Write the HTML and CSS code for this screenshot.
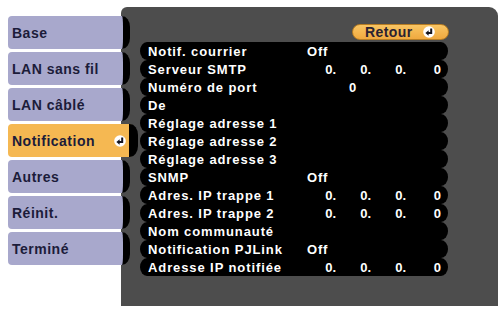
FILE: index.html
```html
<!DOCTYPE html>
<html lang="fr">
<head>
<meta charset="utf-8">
<title>Notification</title>
<link rel="stylesheet" href="styles.css">
</head>
<body>
<div class="screen">
  <nav class="tabs">
    <div class="tab">Base</div>
    <div class="tab">LAN sans fil</div>
    <div class="tab">LAN câblé</div>
    <div class="tab active">Notification
      <svg class="ret" viewBox="0 0 12 12" width="12" height="12"><circle cx="6" cy="6" r="5.8" fill="#fff"/><path d="M8.2 2.6 V7 H5" fill="none" stroke="#15151f" stroke-width="2"/><path d="M2.4 7 L5.6 4.3 V9.7 Z" fill="#15151f"/></svg>
    </div>
    <div class="tab">Autres</div>
    <div class="tab">Réinit.</div>
    <div class="tab">Terminé</div>
  </nav>
  <section class="panel">
    <div class="content">
      <div class="top">
        <div class="back">Retour
          <svg class="ret" viewBox="0 0 12 12" width="12" height="12"><circle cx="6" cy="6" r="5.8" fill="#fff"/><path d="M8.2 2.6 V7 H5" fill="none" stroke="#15151f" stroke-width="2"/><path d="M2.4 7 L5.6 4.3 V9.7 Z" fill="#15151f"/></svg>
        </div>
      </div>
      <div class="rows">
        <div class="row"><span class="label">Notif. courrier</span><span class="val">Off</span></div>
        <div class="row"><span class="label">Serveur SMTP</span><span class="ip"><span>0.</span><span>0.</span><span>0.</span><span>0</span></span></div>
        <div class="row"><span class="label">Numéro de port</span><span class="port">0</span></div>
        <div class="row"><span class="label">De</span></div>
        <div class="row"><span class="label">Réglage adresse 1</span></div>
        <div class="row"><span class="label">Réglage adresse 2</span></div>
        <div class="row"><span class="label">Réglage adresse 3</span></div>
        <div class="row"><span class="label">SNMP</span><span class="val">Off</span></div>
        <div class="row"><span class="label">Adres. IP trappe 1</span><span class="ip"><span>0.</span><span>0.</span><span>0.</span><span>0</span></span></div>
        <div class="row"><span class="label">Adres. IP trappe 2</span><span class="ip"><span>0.</span><span>0.</span><span>0.</span><span>0</span></span></div>
        <div class="row"><span class="label">Nom communauté</span></div>
        <div class="row"><span class="label">Notification PJLink</span><span class="val">Off</span></div>
        <div class="row"><span class="label">Adresse IP notifiée</span><span class="ip"><span>0.</span><span>0.</span><span>0.</span><span>0</span></span></div>
      </div>
    </div>
  </section>
</div>
</body>
</html>
```
FILE: styles.css
```css
html, body {
  margin: 0;
  padding: 0;
  background: #fff;
}
body {
  width: 504px;
  height: 309px;
  overflow: hidden;
  font-family: "Liberation Sans", Arial, sans-serif;
}
.screen {
  display: flex;
  align-items: flex-start;
  box-sizing: border-box;
  height: 309px;
  padding: 7px 6px 0 8px;
}
.tabs {
  position: relative;
  z-index: 1;
  flex: 0 0 130px;
  display: flex;
  flex-direction: column;
  align-items: flex-start;
  gap: 3px;
  padding-top: 9px;
}
.tab {
  box-sizing: border-box;
  width: 122px;
  height: 33px;
  display: flex;
  align-items: center;
  justify-content: space-between;
  padding-left: 4px;
  background: #a8a8cc;
  border-right: 7px solid #000;
  border-radius: 4px 8px 8px 4px / 4px 11px 11px 4px;
  color: #1c1c3a;
  font-weight: bold;
  font-size: 14px;
  letter-spacing: 0.5px;
}
.tab.active {
  width: 130px;
  background: #f5b852;
  border-right-width: 9px;
  padding-right: 3px;
}
.tab .ret {
  display: block;
}
.panel {
  flex: 1;
  margin-left: -17px;
  height: 299px;
  background: #4d4d4d;
  border-radius: 6px 9px 0 0;
}
.content {
  width: 308px;
  padding: 17px 0 0 19px;
}
.top {
  display: flex;
  justify-content: flex-end;
  margin-right: -1px;
  margin-bottom: 2px;
}
.back {
  box-sizing: border-box;
  width: 97px;
  height: 16px;
  display: flex;
  align-items: center;
  justify-content: space-between;
  padding: 0 13px 0 12px;
  background: linear-gradient(#f9c563, #f0a93f);
  border: 1px solid #b77d24;
  border-radius: 8px;
  color: #2a2232;
  font-weight: bold;
  font-size: 14px;
  letter-spacing: 0.4px;
}
.back .ret {
  display: block;
}
.rows {
  display: flex;
  flex-direction: column;
}
.row {
  height: 18px;
  display: grid;
  grid-template-columns: 159px 1fr;
  align-items: center;
  padding-left: 8px;
  background: #000;
  border-radius: 7px / 9px;
  color: #fff;
  font-weight: bold;
  font-size: 13px;
  letter-spacing: 0.9px;
  white-space: nowrap;
}
.val {
  letter-spacing: 0.8px;
}
.port {
  padding-left: 42px;
}
.ip {
  display: grid;
  grid-template-columns: repeat(4, 35px);
  letter-spacing: 0;
}
.ip span {
  text-align: right;
  padding-right: 6px;
}
```
